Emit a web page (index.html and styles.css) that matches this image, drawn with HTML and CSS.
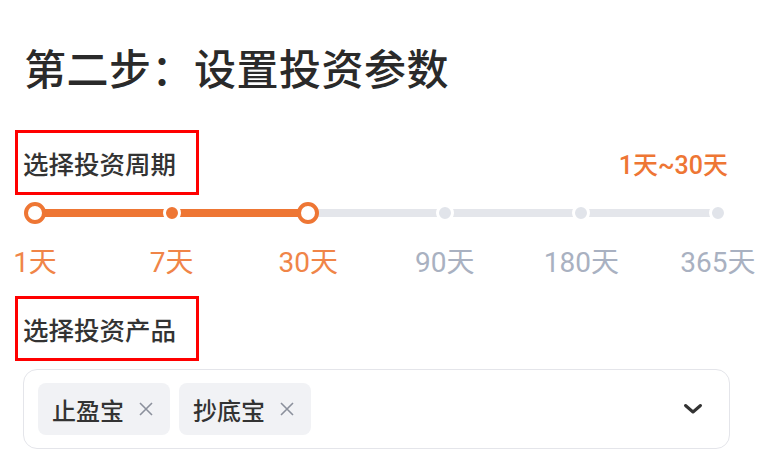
FILE: index.html
```html
<!DOCTYPE html>
<html lang="zh-CN">
<head>
    <meta charset="UTF-8">
    <meta name="viewport" content="width=device-width, initial-scale=1.0">
    <title>设置投资参数</title>
    <link rel="stylesheet" href="styles.css">
</head>
<body>
    <div class="page">
        <h1 class="stepTitle">第二步：设置投资参数</h1>

        <div class="sectionHead">
            <div class="fieldLabel">选择投资周期</div>
            <span class="rangeText">1天~30天</span>
        </div>

        <div class="slider">
            <div class="track"><div class="trackFill"></div></div>
            <div class="stop"><span class="handle"></span></div>
            <div class="stop"><span class="dot active"></span></div>
            <div class="stop"><span class="handle"></span></div>
            <div class="stop"><span class="dot"></span></div>
            <div class="stop"><span class="dot"></span></div>
            <div class="stop"><span class="dot"></span></div>
        </div>
        <div class="sliderLabels">
            <div class="stop"><span class="on">1天</span></div>
            <div class="stop"><span class="on">7天</span></div>
            <div class="stop"><span class="on">30天</span></div>
            <div class="stop"><span>90天</span></div>
            <div class="stop"><span>180天</span></div>
            <div class="stop"><span>365天</span></div>
        </div>

        <div class="sectionHead second">
            <div class="fieldLabel">选择投资产品</div>
        </div>

        <div class="selectBox">
            <span class="tag">止盈宝
                <svg class="tagClose" width="18" height="18" viewBox="0 0 18 18"><path d="M3 3 L15 15 M15 3 L3 15" /></svg>
            </span>
            <span class="tag">抄底宝
                <svg class="tagClose" width="18" height="18" viewBox="0 0 18 18"><path d="M3 3 L15 15 M15 3 L3 15" /></svg>
            </span>
            <svg class="chevron" width="20" height="12" viewBox="0 0 20 12"><path d="M2.5 2.5 L10 9 L17.5 2.5" /></svg>
        </div>
    </div>
</body>
</html>
```

FILE: styles.css
```css
body {
    margin: 0;
    background-color: #ffffff;
    font-family: "Noto Sans CJK SC", "Noto Sans", sans-serif;
    color: #333333;
}

.page {
    padding: 38px 38px 0 23px;
}

.stepTitle {
    margin: 0;
    padding-left: 1px;
    font-size: 42px;
    line-height: 58px;
    font-weight: 500;
    letter-spacing: 0.5px;
    color: #2a2a2a;
}

.sectionHead {
    display: flex;
    align-items: center;
    justify-content: space-between;
    margin-top: 34px;
}

.sectionHead.second {
    margin-top: 16px;
}

.fieldLabel {
    box-sizing: border-box;
    width: 184px;
    height: 65px;
    margin-left: -8px;
    padding-left: 5px;
    border: 3px solid #ff0000;
    display: flex;
    align-items: center;
    font-size: 25.5px;
    font-weight: 500;
    color: #333333;
}

.rangeText {
    margin-right: 2px;
    font-family: Roboto, "Noto Sans CJK SC", sans-serif;
    font-size: 25px;
    font-weight: 500;
    color: #ee7634;
}

.slider {
    position: relative;
    display: flex;
    justify-content: space-between;
    height: 24px;
    margin-top: 6px;
}

.track {
    position: absolute;
    left: 12px;
    right: 12px;
    top: 8px;
    height: 8px;
    background-color: #e4e6eb;
}

.trackFill {
    width: 40%;
    height: 100%;
    background-color: #ee7634;
}

.stop {
    position: relative;
    width: 24px;
    display: flex;
    align-items: center;
    justify-content: center;
}

.handle {
    box-sizing: border-box;
    width: 22px;
    height: 22px;
    border-radius: 50%;
    border: 4px solid #ee7634;
    background-color: #ffffff;
}

.dot {
    width: 12px;
    height: 12px;
    border-radius: 50%;
    border: 3px solid #ffffff;
    background-color: #e1e4ea;
}

.dot.active {
    background-color: #ee7634;
}

.sliderLabels {
    display: flex;
    justify-content: space-between;
    margin-top: 21px;
    height: 34px;
    line-height: 34px;
    font-family: Roboto, "Noto Sans CJK SC", sans-serif;
    font-size: 28px;
    color: #a9b1c1;
}

.sliderLabels span {
    white-space: nowrap;
}

.sliderLabels .on {
    color: #f08548;
}

.selectBox {
    box-sizing: border-box;
    height: 80px;
    margin-top: 8px;
    padding: 0 26px 0 14px;
    border: 1px solid #e4e5ea;
    border-radius: 14px;
    display: flex;
    align-items: center;
    gap: 9px;
}

.tag {
    box-sizing: border-box;
    height: 52px;
    padding: 0 15px 0 14px;
    border-radius: 8px;
    background-color: #f1f2f5;
    display: flex;
    align-items: center;
    gap: 13px;
    font-size: 24px;
    font-weight: 500;
    color: #333333;
}

.tagClose path {
    fill: none;
    stroke: #8b909c;
    stroke-width: 1.6;
}

.chevron {
    margin-left: auto;
}

.chevron path {
    fill: none;
    stroke: #333333;
    stroke-width: 3;
    stroke-linecap: round;
    stroke-linejoin: round;
}
```
